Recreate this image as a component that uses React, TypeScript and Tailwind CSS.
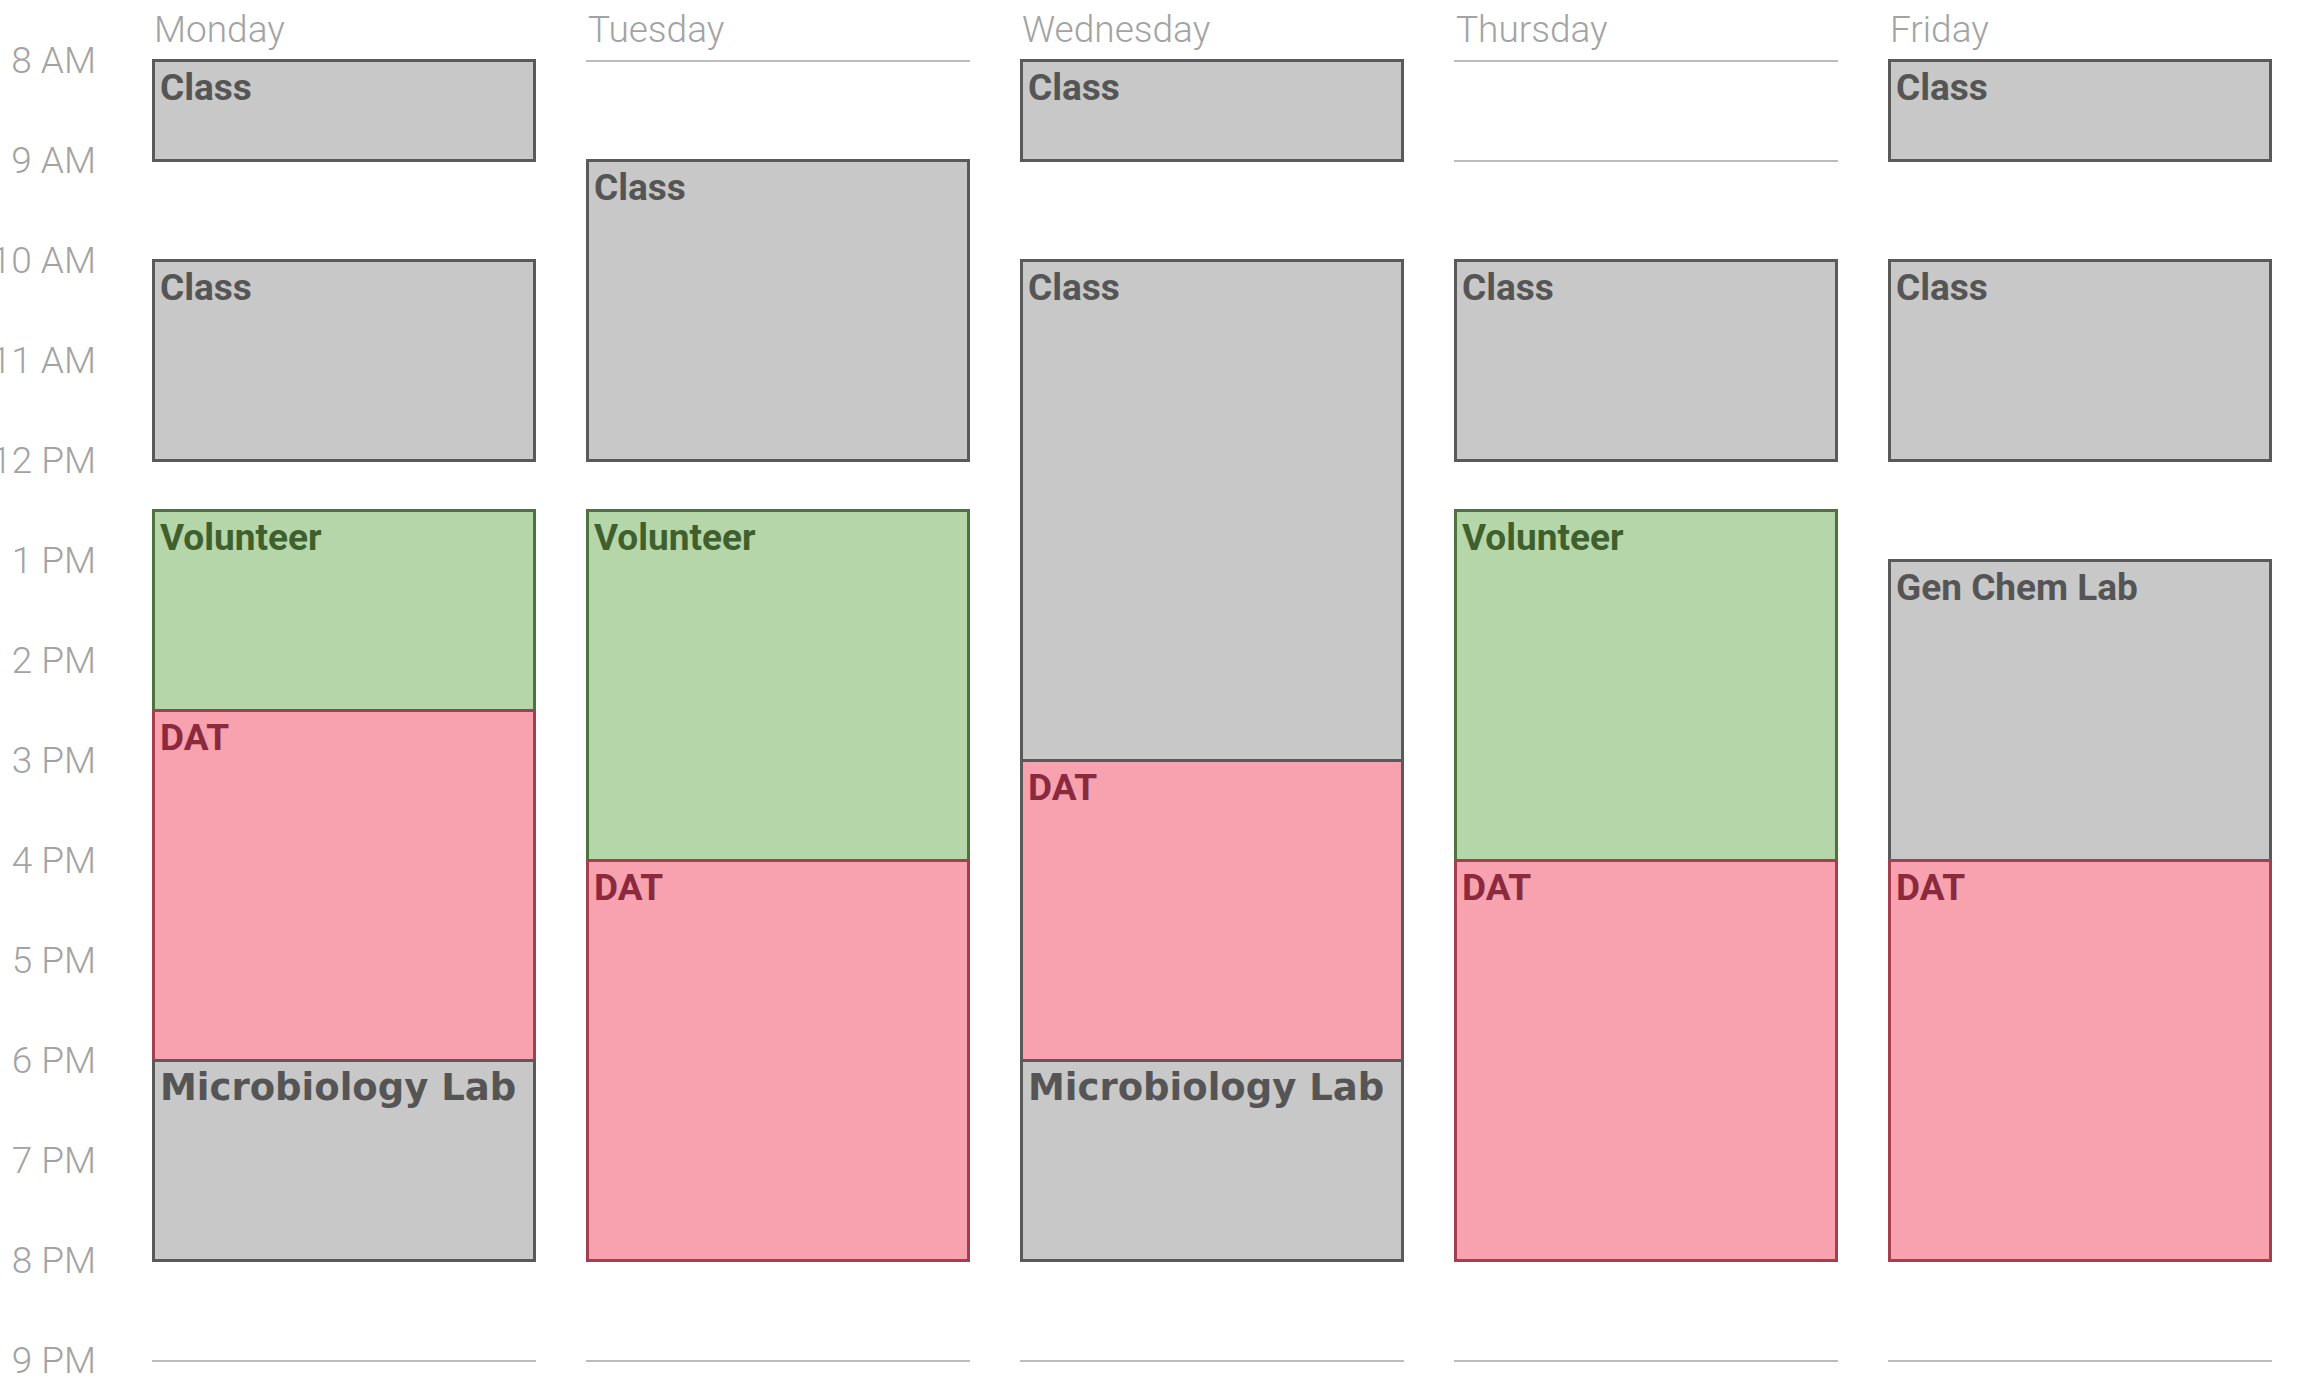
import React from "react";

type Kind = "gray" | "green" | "pink";

type CalEvent = {
  title: string;
  start: number;
  end: number;
  kind: Kind;
  wide?: boolean;
  border?: string;
};

const HOUR_PX = 100;

const hours = [
  "8 AM",
  "9 AM",
  "10 AM",
  "11 AM",
  "12 PM",
  "1 PM",
  "2 PM",
  "3 PM",
  "4 PM",
  "5 PM",
  "6 PM",
  "7 PM",
  "8 PM",
  "9 PM",
];

const days: { name: string; events: CalEvent[] }[] = [
  {
    name: "Monday",
    events: [
      { title: "Class", start: 8, end: 9, kind: "gray" },
      { title: "Class", start: 10, end: 12, kind: "gray" },
      { title: "Volunteer", start: 12.5, end: 14.5, kind: "green" },
      { title: "DAT", start: 14.5, end: 18, kind: "pink" },
      { title: "Microbiology Lab", start: 18, end: 20, kind: "gray", wide: true },
    ],
  },
  {
    name: "Tuesday",
    events: [
      { title: "Class", start: 9, end: 12, kind: "gray" },
      { title: "Volunteer", start: 12.5, end: 16, kind: "green" },
      { title: "DAT", start: 16, end: 20, kind: "pink" },
    ],
  },
  {
    name: "Wednesday",
    events: [
      { title: "Class", start: 8, end: 9, kind: "gray" },
      { title: "Class", start: 10, end: 15, kind: "gray" },
      { title: "DAT", start: 15, end: 18, kind: "pink", border: "gray" },
      { title: "Microbiology Lab", start: 18, end: 20, kind: "gray", wide: true },
    ],
  },
  {
    name: "Thursday",
    events: [
      { title: "Class", start: 10, end: 12, kind: "gray" },
      { title: "Volunteer", start: 12.5, end: 16, kind: "green" },
      { title: "DAT", start: 16, end: 20, kind: "pink" },
    ],
  },
  {
    name: "Friday",
    events: [
      { title: "Class", start: 8, end: 9, kind: "gray" },
      { title: "Class", start: 10, end: 12, kind: "gray" },
      { title: "Gen Chem Lab", start: 13, end: 16, kind: "gray" },
      { title: "DAT", start: 16, end: 20, kind: "pink" },
    ],
  },
];

const kindStyles: Record<Kind, string> = {
  gray: "bg-[#c8c8c8] border-[#5a5a5a] text-[#555555]",
  green: "bg-[#b5d6a9] border-[#4e733e] text-[#3f602d]",
  pink: "bg-[#f8a1af] border-[#a3404f] text-[#8b2a3e]",
};

function EventBlock({ ev }: { ev: CalEvent }) {
  // position on the time grid comes from the event data
  const top = (ev.start - 8) * HOUR_PX - 1;
  const height = (ev.end - ev.start) * HOUR_PX + 3;
  const borderCls = ev.border === "gray" ? "!border-[#5a5a5a]" : "";
  return (
    <div
      className={`absolute left-0 right-0 border-[3px] px-[5px] pt-[4px] ${kindStyles[ev.kind]} ${borderCls}`}
      style={{ top, height }}
    >
      <p
        className={`leading-[43px] font-bold whitespace-nowrap text-[37px] ${
          ev.wide
            ? "font-['DejaVu_Sans',sans-serif]"
            : "font-['Roboto',sans-serif]"
        }`}
      >
        {ev.title}
      </p>
    </div>
  );
}

export default function App() {
  return (
    <div className="w-full h-screen overflow-hidden bg-white flex font-['Roboto',sans-serif]">
      {/* TIME AXIS */}
      <div className="w-[102px] shrink-0 pt-[10px]">
        {hours.map((h) => (
          <div
            key={h}
            className="h-[100px] flex items-center justify-end pr-[6px]"
          >
            <span className="text-[37px] font-light text-[#a3a3a3] whitespace-nowrap leading-none">
              {h}
            </span>
          </div>
        ))}
      </div>

      {/* DAY COLUMNS */}
      <div className="flex gap-[50px] ml-[50px]">
        {days.map((day) => (
          <div key={day.name} className="w-[384px] shrink-0 flex flex-col">
            <div className="h-[60px] pt-[8px] pl-[2px]">
              <span className="text-[37px] leading-[43px] font-light text-[#a3a3a3]">
                {day.name}
              </span>
            </div>
            <div className="relative">
              {hours.slice(0, 13).map((h) => (
                <div
                  key={h}
                  className="h-[100px] border-t-2 border-[#bdbdbd]"
                />
              ))}
              <div className="border-t-2 border-[#bdbdbd]" />
              {day.events.map((ev, i) => (
                <EventBlock key={i} ev={ev} />
              ))}
            </div>
          </div>
        ))}
      </div>
    </div>
  );
}
